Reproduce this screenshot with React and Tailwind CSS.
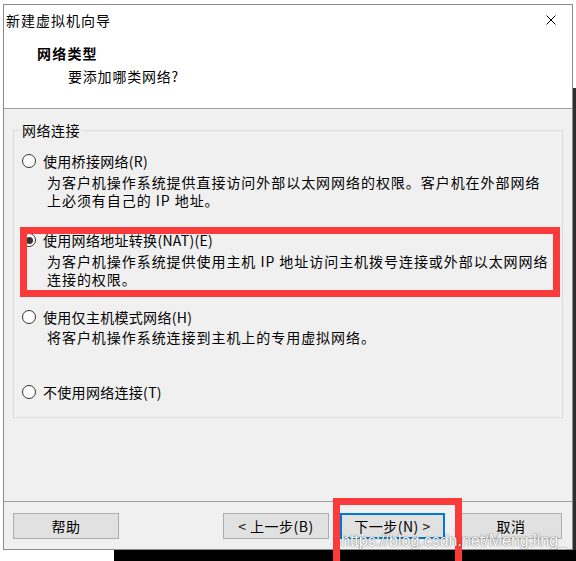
import React from "react";

const CJK = { fontFamily: '"Noto Sans CJK SC", "Noto Sans", sans-serif' };

function Radio({ checked }) {
  return (
    <span className="relative w-[14px] h-[14px] rounded-full border border-[#333333] bg-white shrink-0 flex items-center justify-center">
      {checked && <span className="w-[7px] h-[7px] rounded-full bg-[#333333]" />}
    </span>
  );
}

function Option({ label, checked, desc, mt, descMt = "mt-[3px]" }) {
  return (
    <div className={mt}>
      <div className="flex items-center pl-[8px] h-[18px]">
        <Radio checked={checked} />
        <span className="ml-[7px] text-[14px] leading-[18px] tracking-[0.3px] text-black whitespace-nowrap">
          {label}
        </span>
      </div>
      {desc && (
        <div className={`${descMt} pl-[33px] text-[14px] leading-[18px] tracking-[0.95px] text-black whitespace-nowrap`}>
          {desc.map((l, i) => (
            <div key={i}>{l}</div>
          ))}
        </div>
      )}
    </div>
  );
}

function Btn({ children, w, primary }) {
  return (
    <div
      className={`${w} h-[26px] flex items-center justify-center bg-[#e1e1e1] text-[14px] tracking-[0.5px] text-black ${
        primary ? "border-2 border-[#0078d7]" : "border border-[#adadad]"
      }`}
    >
      {children}
    </div>
  );
}

export default function App() {
  return (
    <div className="relative w-[576px] h-[561px] bg-white overflow-hidden" style={CJK}>
      <div className="flex h-[550px]">
        <div className="w-[3px] shrink-0" />
        <div className="w-[570px] h-[546px] mt-[4px] border border-[#8c8c8c] flex flex-col shrink-0">
          {/* header */}
          <div className="h-[104px] bg-white border-b border-[#a0a0a0] shrink-0">
            <div className="h-[30px] flex items-center justify-between pl-[2px] pr-[16px]">
              <span className="text-[14px] tracking-[1px] text-black">新建虚拟机向导</span>
              <svg width="10" height="10" viewBox="0 0 10 10">
                <path d="M0.5 0.5 L9.5 9.5 M9.5 0.5 L0.5 9.5" stroke="#000" strokeWidth="1" />
              </svg>
            </div>
            <div className="mt-[8px] pl-[33px] text-[14px] leading-[20px] font-bold tracking-[1.2px] text-black">
              网络类型
            </div>
            <div className="mt-[3px] pl-[64px] text-[14px] leading-[20px] tracking-[0.8px] text-black">
              要添加哪类网络?
            </div>
          </div>
          {/* body */}
          <div className="flex-1 bg-[#f0f0f0] flex flex-col">
            <fieldset className="mt-[12px] ml-[9px] w-[550px] h-[297px] border border-[#dcdcdc] px-0 pb-0">
              <legend className="ml-[6px] px-[2px] text-[14px] leading-[18px] tracking-[0.5px] text-black">
                网络连接
              </legend>
              <Option
                mt="mt-[13px]"
                label="使用桥接网络(R)"
                desc={[
                  "为客户机操作系统提供直接访问外部以太网网络的权限。客户机在外部网络",
                  "上必须有自己的 IP 地址。",
                ]}
              />
              <Option
                mt="mt-[22px]"
                checked
                label="使用网络地址转换(NAT)(E)"
                desc={[
                  "为客户机操作系统提供使用主机 IP 地址访问主机拨号连接或外部以太网网络",
                  "连接的权限。",
                ]}
              />
              <Option
                mt="mt-[20px]"
                descMt="mt-[2px]"
                label="使用仅主机模式网络(H)"
                desc={["将客户机操作系统连接到主机上的专用虚拟网络。"]}
              />
              <Option mt="mt-[37px]" label="不使用网络连接(T)" />
            </fieldset>
            <div className="flex-1" />
            <div className="h-[48px] border-t border-[#a0a0a0] pt-[11px] flex items-start shrink-0">
              <div className="ml-[9px]">
                <Btn w="w-[106px]">帮助</Btn>
              </div>
              <div className="flex-1" />
              <Btn w="w-[106px]">&lt; 上一步(B)</Btn>
              <div className="w-[11px]" />
              <Btn w="w-[105px]" primary>
                下一步(N) &gt;
              </Btn>
              <div className="w-[15px]" />
              <Btn w="w-[102px]">取消</Btn>
              <div className="w-[10px]" />
            </div>
          </div>
        </div>
        <div className="flex-1 flex flex-col">
          <div className="h-[88px]" />
          <div className="flex-1 bg-[#2e2e2e]" />
        </div>
      </div>
      <div className="flex h-[11px]">
        <div className="w-[114px]" />
        <div className="flex-1 bg-black" />
      </div>

      {/* annotation overlays */}
      <div className="absolute left-[20px] top-[227px] w-[540px] h-[70px] border-[7px] border-[#fb3b3b]" />
      <div className="absolute left-[333px] top-[498px] w-[129px] h-[80px] border-[7px] border-[#fb3b3b]" />
      <div
        className="absolute left-[341px] top-[532px] text-[16px] leading-[18px] text-white whitespace-nowrap"
        style={{
          fontFamily: '"Liberation Sans", Arial, sans-serif',
          textShadow: "0 0 1px rgba(0,0,0,0.55), 0 0 2px rgba(0,0,0,0.35)",
        }}
      >
        https://blog.csdn.net/MengJing_
      </div>
    </div>
  );
}
